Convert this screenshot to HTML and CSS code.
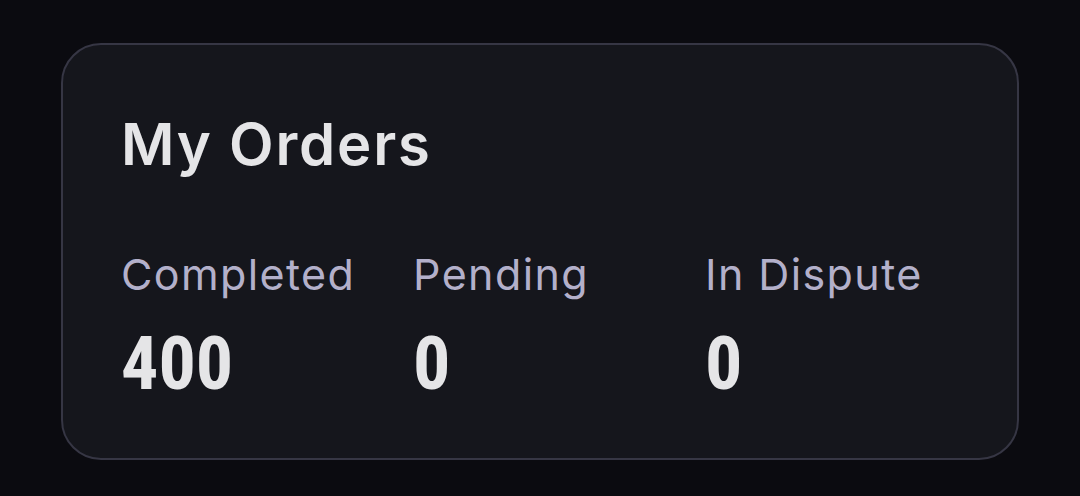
FILE: index.html
```html
<!DOCTYPE html>
<html lang="en">
<head>
  <meta charset="UTF-8">
  <title>My Orders</title>
  <link rel="stylesheet" href="styles.css">
</head>
<body>
  <div class="orders-card">
    <h1>My Orders</h1>

    <div class="stats">
      <div class="stat">
        <span class="stat-label">Completed</span>
        <span class="stat-value">400</span>
      </div>
      <div class="stat">
        <span class="stat-label">Pending</span>
        <span class="stat-value">0</span>
      </div>
      <div class="stat">
        <span class="stat-label">In Dispute</span>
        <span class="stat-value">0</span>
      </div>
    </div>
  </div>
</body>
</html>
```

FILE: styles.css
```css
body {
  margin: 0;
  padding: 43px 61px;
  background-color: #0b0b10;
  font-family: Inter, "Noto Sans", sans-serif;
}

.orders-card {
  box-sizing: border-box;
  width: 958px;
  height: 417px;
  padding: 59px 58px;
  border: 2px solid #363644;
  border-radius: 40px;
  background-color: #15161c;
}

h1 {
  margin: 0;
  font-size: 58px;
  font-weight: 600;
  line-height: 80px;
  letter-spacing: 1.8px;
  color: #e5e5e7;
}

.stats {
  display: grid;
  grid-template-columns: repeat(3, 292px);
  margin-top: 65px;
}

.stat {
  display: flex;
  flex-direction: column;
}

.stat-label {
  font-size: 43px;
  line-height: 50px;
  letter-spacing: 1.4px;
  color: #b3b0ca;
}

.stat-value {
  margin-top: 28px;
  font-family: "Roboto Condensed", "Open Sans", sans-serif;
  font-stretch: condensed;
  font-size: 74px;
  font-weight: 700;
  line-height: 74px;
  color: #e5e5e7;
}
```
